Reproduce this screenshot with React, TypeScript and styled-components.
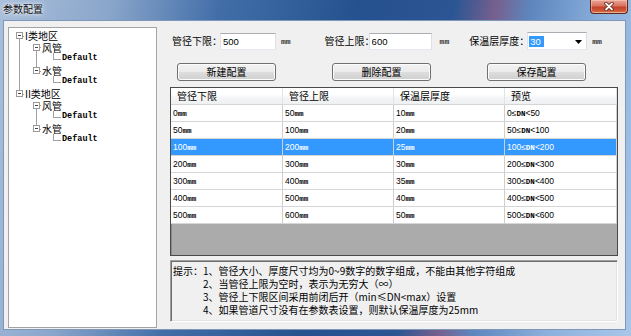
import styled, { createGlobalStyle } from "styled-components"

const CJK = `"Noto Sans CJK SC", "Noto Sans", sans-serif`
const SANS = `"Liberation Sans", Arial, sans-serif`
const MONO = `"Liberation Mono", "DejaVu Sans Mono", monospace`

const GlobalStyle = createGlobalStyle`
    html, body {
        margin: 0;
        padding: 0;
    }
    body {
        width: 631px;
        height: 336px;
        overflow: hidden;
        font-family: ${CJK};
        color: #000;
    }
`

const Window = styled.div`
    width: 631px;
    height: 336px;
    box-sizing: border-box;
    display: flex;
    flex-direction: column;
    padding: 0 5px 6px 3px;
    background: linear-gradient(
        100deg,
        #a9bfdb 0%,
        #8aa6cb 16%,
        #426ea8 32%,
        #25518e 52%,
        #2b5693 66%,
        #76608e 72%,
        #5d86be 77%,
        #8db1dd 88%,
        #a8c6e8 100%
    );
`

const TitleBar = styled.div`
    height: 20px;
    display: flex;
    align-items: flex-start;
`

const Title = styled.div`
    padding: 3px 0 0 0;
    font-size: 10px;
    line-height: 12px;
    color: #111;
    text-shadow: 0 0 3px #fff, 0 0 6px rgba(255, 255, 255, 0.9);
`

const CloseButton = styled.div`
    margin-left: auto;
    margin-right: -2px;
    width: 38px;
    height: 14px;
    box-sizing: border-box;
    display: flex;
    align-items: center;
    justify-content: center;
    border: 1px solid #5a2b24;
    border-top: none;
    border-radius: 0 0 4px 4px;
    background: linear-gradient(#e9a596 0%, #d9735e 45%, #c5412a 55%, #cf5a3a 85%, #e48a62 100%);
    box-shadow: inset 0 0 0 1px rgba(255, 220, 200, 0.45);
`

const Body = styled.div`
    flex: 1;
    display: flex;
    box-sizing: border-box;
    padding: 6px 7px 1px 4px;
    background: #f0f0f0;
    border: 1px solid #7f97b8;
    min-height: 0;
`

const TreePanel = styled.div`
    width: 149px;
    box-sizing: border-box;
    background: #fff;
    border: 1px solid #a3a3a3;
    padding: 2px 0 0 2px;
`

const TreeRow = styled.div`
    display: flex;
    height: 11.6px;
    align-items: stretch;
`

const Guide = styled.div<{ $line: boolean }>`
    position: relative;
    width: 17px;
    flex-shrink: 0;

    &::before {
        content: "";
        display: ${(p) => (p.$line ? "block" : "none")};
        position: absolute;
        left: 8px;
        top: 0;
        bottom: 0;
        width: 1px;
        background: #a0a0a0;
    }
`

const NodeCell = styled.div<{ $up?: boolean; $down?: boolean; $leaf?: boolean }>`
    position: relative;
    width: ${(p) => (p.$leaf ? 16 : 13)}px;
    flex-shrink: 0;
    display: flex;
    align-items: center;
    padding-left: 5px;
    box-sizing: border-box;

    &::before {
        content: "";
        display: ${(p) => (p.$up || p.$down || p.$leaf ? "block" : "none")};
        position: absolute;
        left: 8px;
        width: 1px;
        top: ${(p) => (p.$up || p.$leaf ? "0" : "50%")};
        bottom: ${(p) => (p.$down ? "0" : "50%")};
        background: #a0a0a0;
    }

    &::after {
        content: "";
        position: absolute;
        left: ${(p) => (p.$leaf ? 8 : 12)}px;
        right: 0;
        top: 50%;
        height: 1px;
        background: #a0a0a0;
    }
`

const ExpandBox = styled.div`
    position: relative;
    z-index: 1;
    width: 7px;
    height: 7px;
    box-sizing: border-box;
    border: 1px solid #9a9a9a;
    background: #fff;

    &::after {
        content: "";
        position: absolute;
        left: 1px;
        top: 2px;
        width: 3px;
        height: 1px;
        background: #444;
    }
`

const TreeLabel = styled.span<{ $leaf?: boolean }>`
    margin-left: 1px;
    white-space: nowrap;
    font-family: ${(p) => (p.$leaf ? MONO : CJK)};
    font-size: ${(p) => (p.$leaf ? "8.5px" : "10px")};
    font-weight: ${(p) => (p.$leaf ? 700 : 400)};
    line-height: 11.6px;
`

const Main = styled.div`
    flex: 1;
    margin-left: 13px;
    display: flex;
    flex-direction: column;
`

const FormRow = styled.div`
    margin-top: 5px;
    height: 18px;
    display: flex;
    align-items: center;
    padding-left: 2px;
`

const FieldLabel = styled.span<{ $w: number; $gap?: number }>`
    width: ${(p) => p.$w}px;
    margin-left: ${(p) => p.$gap ?? 0}px;
    flex-shrink: 0;
    white-space: nowrap;
    font-size: 10px;
    line-height: 12px;
`

const Input = styled.input<{ $w: number }>`
    width: ${(p) => p.$w}px;
    height: 17px;
    box-sizing: border-box;
    margin: 0;
    padding: 0 2px;
    border: 1px solid;
    border-color: #abadb3 #dbdfe6 #e3e9ef #e2e3ea;
    background: #fff;
    font-family: ${SANS};
    font-size: 9.5px;
    outline: none;
`

const UnitLabel = styled.span<{ $gap: number }>`
    margin-left: ${(p) => p.$gap}px;
    font-family: ${MONO};
    font-weight: 700;
    font-size: 8px;
    color: #333;
`

const Combo = styled.div`
    width: 60px;
    height: 18px;
    box-sizing: border-box;
    display: flex;
    align-items: center;
    padding: 0 4px 0 1px;
    border: 1px solid;
    border-color: #abadb3 #dbdfe6 #e3e9ef #e2e3ea;
    background: #fff;
`

const ComboValue = styled.span`
    background: #3399ff;
    color: #fff;
    font-family: ${SANS};
    font-size: 9.5px;
    line-height: 11px;
    padding: 0 3px 0 1px;
`

const ComboArrow = styled.svg`
    margin-left: auto;
    margin-top: 2px;
`

const ButtonRow = styled.div`
    margin-top: 13px;
    display: flex;
    gap: 56px;
    padding-left: 7px;
`

const Button = styled.button`
    width: 99px;
    height: 18px;
    box-sizing: border-box;
    padding: 0;
    border: 1px solid #707070;
    border-radius: 3px;
    background: linear-gradient(#f2f2f2 0%, #ebebeb 48%, #dddddd 52%, #cfcfcf 100%);
    box-shadow: inset 0 0 0 1px #fcfcfc;
    font-family: ${CJK};
    font-size: 10px;
    line-height: 14px;
    color: #000;
`

const TableFrame = styled.div`
    margin-top: 6px;
    height: 169px;
    box-sizing: border-box;
    border: 1px solid #4a4a4a;
    box-shadow: inset 1px 1px 0 #8a8a8a;
    background: #ababab;
    overflow: hidden;
`

const Grid = styled.div`
    display: grid;
    grid-template-columns: 112px 111px 111px 112px;
`

const HeaderCell = styled.div`
    height: 17px;
    box-sizing: border-box;
    padding-left: 6px;
    border-right: 1px solid #e2e3e6;
    border-bottom: 1px solid #d5d5d5;
    background: linear-gradient(#ffffff 0%, #ffffff 40%, #f4f5f7 60%, #eff0f2 100%);
    font-size: 10px;
    line-height: 16px;
    white-space: nowrap;
`

const Cell = styled.div<{ $selected: boolean }>`
    height: 17px;
    box-sizing: border-box;
    padding-left: 2px;
    border-right: 1px solid #cfcfcf;
    border-bottom: 1px solid #d6d6d6;
    background: ${(p) => (p.$selected ? "#3399ff" : "#fff")};
    color: ${(p) => (p.$selected ? "#fff" : "#000")};
    font-family: ${SANS};
    font-size: 8.5px;
    line-height: 16px;
    white-space: nowrap;
`

const Narrow = styled.span`
    font-family: ${MONO};
    font-weight: 700;
    font-size: 7.5px;
`

const TipsBox = styled.div`
    margin-top: 4px;
    height: 62px;
    box-sizing: border-box;
    display: flex;
    padding: 3px 0 0 2px;
    border: 1px solid;
    border-color: #a0a0a0 #ffffff #ffffff #a0a0a0;
    box-shadow: inset 1px 1px 0 #6d6d6d, inset -1px -1px 0 #e3e3e3;
    background: #f0f0f0;
`

const TipsLabel = styled.div`
    width: 30px;
    flex-shrink: 0;
    font-size: 10px;
    line-height: 13.1px;
`

const TipsList = styled.div`
    display: flex;
    flex-direction: column;
`

const TipLine = styled.div`
    font-size: 10px;
    line-height: 13.1px;
    white-space: nowrap;
`

type TreeItem = {
    label: string
    guides: boolean[]
    leaf?: boolean
    up?: boolean
    down?: boolean
}

const treeItems: TreeItem[] = [
    { label: "I类地区", guides: [], down: true },
    { label: "风管", guides: [true], down: true },
    { label: "Default", guides: [true, true], leaf: true },
    { label: "水管", guides: [true], up: true },
    { label: "Default", guides: [true, false], leaf: true },
    { label: "II类地区", guides: [], up: true },
    { label: "风管", guides: [false], down: true },
    { label: "Default", guides: [false, true], leaf: true },
    { label: "水管", guides: [false], up: true },
    { label: "Default", guides: [false, false], leaf: true },
]

const rows = [
    { min: 0, max: 50, thick: 10 },
    { min: 50, max: 100, thick: 20 },
    { min: 100, max: 200, thick: 25 },
    { min: 200, max: 300, thick: 30 },
    { min: 300, max: 400, thick: 35 },
    { min: 400, max: 500, thick: 40 },
    { min: 500, max: 600, thick: 50 },
]

const selectedRow = 2

const tips = [
    "1、管径大小、厚度尺寸均为0~9数字的数字组成，不能由其他字符组成",
    "2、当管径上限为空时，表示为无穷大（∞）",
    "3、管径上下限区间采用前闭后开（min≤DN<max）设置",
    "4、如果管道尺寸没有在参数表设置，则默认保温厚度为25mm",
]

function Tree() {
    return (
        <TreePanel>
            {treeItems.map((item, i) => (
                <TreeRow key={i}>
                    {item.guides.map((g, j) => (
                        <Guide key={j} $line={g} />
                    ))}
                    <NodeCell $up={item.up} $down={item.down} $leaf={item.leaf}>
                        {!item.leaf && <ExpandBox />}
                    </NodeCell>
                    <TreeLabel $leaf={item.leaf}>{item.label}</TreeLabel>
                </TreeRow>
            ))}
        </TreePanel>
    )
}

function Mm({ value }: { value: number }) {
    return (
        <>
            {value}
            <Narrow>mm</Narrow>
        </>
    )
}

export default function App() {
    return (
        <>
            <GlobalStyle />
            <Window>
                <TitleBar>
                    <Title>参数配置</Title>
                    <CloseButton>
                        <svg width="10" height="9" viewBox="0 0 10 9">
                            <path d="M2 1.5 L8 7.5 M8 1.5 L2 7.5" stroke="#5a1d12" strokeWidth="3.4" strokeLinecap="round" />
                            <path d="M2 1.5 L8 7.5 M8 1.5 L2 7.5" stroke="#fff" strokeWidth="1.8" strokeLinecap="round" />
                        </svg>
                    </CloseButton>
                </TitleBar>
                <Body>
                    <Tree />
                    <Main>
                        <FormRow>
                            <FieldLabel $w={48}>管径下限：</FieldLabel>
                            <Input $w={56} defaultValue="500" />
                            <UnitLabel $gap={5}>mm</UnitLabel>
                            <FieldLabel $w={44} $gap={34}>管径上限：</FieldLabel>
                            <Input $w={63} defaultValue="600" />
                            <UnitLabel $gap={8}>mm</UnitLabel>
                            <FieldLabel $w={58} $gap={20}>保温层厚度：</FieldLabel>
                            <Combo>
                                <ComboValue>30</ComboValue>
                                <ComboArrow width="7" height="4" viewBox="0 0 7 4">
                                    <path d="M0 0 H7 L3.5 4 Z" fill="#000" />
                                </ComboArrow>
                            </Combo>
                            <UnitLabel $gap={5}>mm</UnitLabel>
                        </FormRow>
                        <ButtonRow>
                            <Button>新建配置</Button>
                            <Button>删除配置</Button>
                            <Button>保存配置</Button>
                        </ButtonRow>
                        <TableFrame>
                            <Grid>
                                <HeaderCell>管径下限</HeaderCell>
                                <HeaderCell>管径上限</HeaderCell>
                                <HeaderCell>保温层厚度</HeaderCell>
                                <HeaderCell>预览</HeaderCell>
                                {rows.map((r, i) => {
                                    const sel = i === selectedRow
                                    return [
                                        <Cell key={`a${i}`} $selected={sel}>
                                            <Mm value={r.min} />
                                        </Cell>,
                                        <Cell key={`b${i}`} $selected={sel}>
                                            <Mm value={r.max} />
                                        </Cell>,
                                        <Cell key={`c${i}`} $selected={sel}>
                                            <Mm value={r.thick} />
                                        </Cell>,
                                        <Cell key={`d${i}`} $selected={sel}>
                                            {r.min}≤<Narrow>DN</Narrow>&lt;{r.max}
                                        </Cell>,
                                    ]
                                })}
                            </Grid>
                        </TableFrame>
                        <TipsBox>
                            <TipsLabel>提示：</TipsLabel>
                            <TipsList>
                                {tips.map((t, i) => (
                                    <TipLine key={i}>{t}</TipLine>
                                ))}
                            </TipsList>
                        </TipsBox>
                    </Main>
                </Body>
            </Window>
        </>
    )
}
